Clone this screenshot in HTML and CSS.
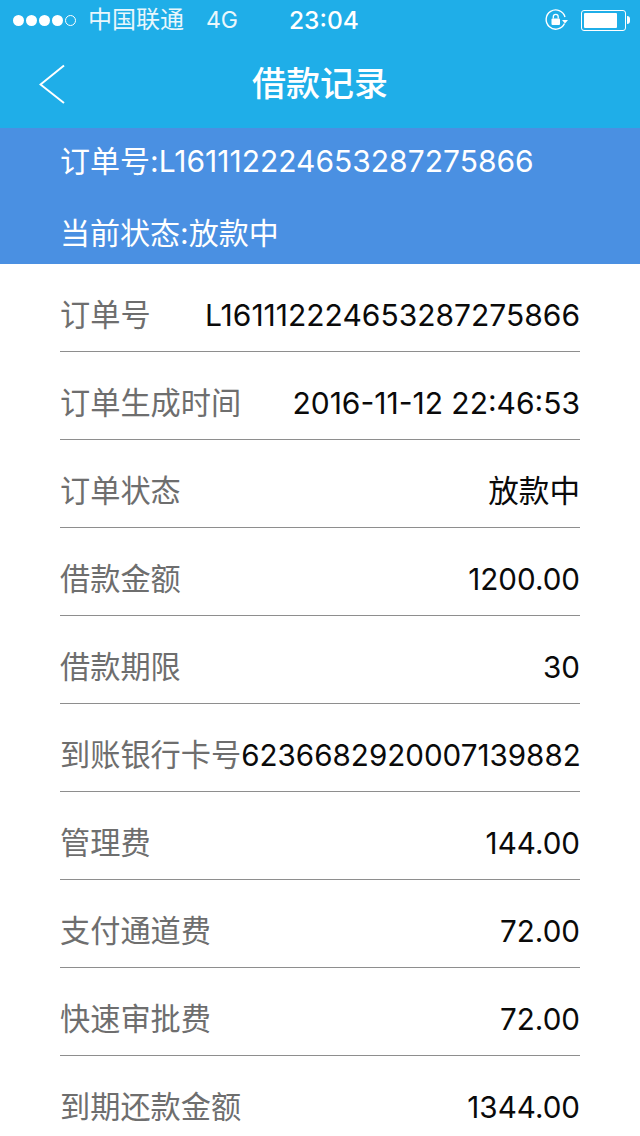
FILE: index.html
```html
<!DOCTYPE html>
<html lang="zh-CN">
<head>
    <meta charset="UTF-8">
    <meta name="viewport" content="width=device-width, initial-scale=1.0">
    <title>借款记录</title>
    <link rel="stylesheet" href="styles.css">
</head>
<body>

    <!-- Status bar -->
    <div class="status-bar">
        <div class="status-left">
            <div class="signal">
                <span class="dot"></span>
                <span class="dot"></span>
                <span class="dot"></span>
                <span class="dot"></span>
                <span class="dot empty"></span>
            </div>
            <span class="carrier">中国联通</span>
            <span class="network">4G</span>
        </div>
        <span class="clock">23:04</span>
        <div class="status-right">
            <svg class="lock-icon" width="24" height="24" viewBox="0 0 24 24">
                <path d="M20.5 15.5A9.6 9.6 0 1 1 21 9" fill="none" stroke="#fff" stroke-width="1.4"/>
                <path d="M18 12h6l-3 3.6z" fill="#fff"/>
                <rect x="7.5" y="10.5" width="8.5" height="6.5" rx="1" fill="#fff"/>
                <path d="M9.3 10.5V8.8a2.4 2.4 0 0 1 4.9 0v1.7" fill="none" stroke="#fff" stroke-width="1.3"/>
            </svg>
            <div class="battery">
                <div class="battery-body"><div class="battery-fill"></div></div>
                <div class="battery-tip"></div>
            </div>
        </div>
    </div>

    <!-- Nav -->
    <div class="nav">
        <svg class="back" width="26" height="40" viewBox="0 0 26 40">
            <path d="M25 1.5L1.5 20.5L25 39" fill="none" stroke="#fff" stroke-width="2"/>
        </svg>
        <span class="nav-title">借款记录</span>
    </div>

    <!-- Order summary -->
    <div class="summary">
        <div class="summary-line">订单号:L161112224653287275866</div>
        <div class="summary-line">当前状态:放款中</div>
    </div>

    <!-- Details -->
    <div class="details">
        <div class="row"><span class="label">订单号</span><span class="value wide">L161112224653287275866</span></div>
        <div class="row"><span class="label">订单生成时间</span><span class="value wide">2016-11-12 22:46:53</span></div>
        <div class="row"><span class="label">订单状态</span><span class="value cjk">放款中</span></div>
        <div class="row"><span class="label">借款金额</span><span class="value">1200.00</span></div>
        <div class="row"><span class="label">借款期限</span><span class="value">30</span></div>
        <div class="row"><span class="label">到账银行卡号</span><span class="value">6236682920007139882</span></div>
        <div class="row"><span class="label">管理费</span><span class="value">144.00</span></div>
        <div class="row"><span class="label">支付通道费</span><span class="value">72.00</span></div>
        <div class="row"><span class="label">快速审批费</span><span class="value">72.00</span></div>
        <div class="row"><span class="label">到期还款金额</span><span class="value">1344.00</span></div>
    </div>

</body>
</html>
```

FILE: styles.css
```css
body {
    font-family: Inter, 'Noto Sans CJK SC', sans-serif;
    margin: 0;
    width: 640px;
    height: 1136px;
    overflow: hidden;
    background: #fff;
}

/* Status bar */
.status-bar {
    position: relative;
    height: 40px;
    background: #1faee8;
    color: #fff;
    display: flex;
    align-items: center;
    justify-content: space-between;
    padding: 0 10px 0 13px;
    font-size: 24px;
    line-height: 40px;
}

.status-left {
    display: flex;
    align-items: center;
}

.signal {
    display: flex;
    gap: 2px;
    margin-right: 12px;
}

.dot {
    width: 11px;
    height: 11px;
    border-radius: 50%;
    background: #fff;
}

.dot.empty {
    background: none;
    border: 1px solid #fff;
    box-sizing: border-box;
}

.carrier {
    opacity: 0.9;
}

.network {
    margin-left: 22px;
    font-size: 23px;
    opacity: 0.9;
}

.clock {
    position: absolute;
    left: 289px;
    font-size: 24.5px;
    font-weight: 500;
}

.status-right {
    display: flex;
    align-items: center;
    gap: 13px;
}

.battery {
    display: flex;
    align-items: center;
}

.battery-body {
    width: 39px;
    height: 15px;
    border: 1px solid #fff;
    border-radius: 3px;
    padding: 2px;
}

.battery-fill {
    width: 33px;
    height: 100%;
    background: #fff;
    border-radius: 1px;
}

.battery-tip {
    width: 3px;
    height: 8px;
    background: #fff;
    border-radius: 0 3px 3px 0;
    margin-left: 1px;
}

/* Nav */
.nav {
    position: relative;
    height: 88px;
    background: #1faee8;
    display: flex;
    align-items: center;
    justify-content: center;
}

.back {
    position: absolute;
    left: 39px;
    top: 24px;
}

.nav-title {
    color: #fff;
    font-size: 34px;
    font-weight: 500;
    margin-top: -6px;
}

/* Order summary */
.summary {
    height: 136px;
    background: #4a90e2;
    color: #fff;
    padding-left: 60px;
    font-size: 30px;
}

.summary-line {
    height: 68px;
    line-height: 66px;
}

.summary-line + .summary-line {
    line-height: 75px;
}

/* Details */
.details {
    padding: 0 60px;
}

.row {
    height: 87px;
    border-bottom: 1px solid #8e8e8e;
    display: flex;
    align-items: center;
    justify-content: space-between;
}

.label {
    color: #6e6e6e;
    font-size: 30.2px;
    white-space: nowrap;
    margin-top: 10px;
}

.value {
    color: #0a0a0a;
    font-size: 29.6px;
    white-space: nowrap;
    margin-top: 14px;
}

.value.wide {
    font-size: 30px;
}

.value.cjk {
    font-size: 30.6px;
    margin-top: 10px;
}
```
